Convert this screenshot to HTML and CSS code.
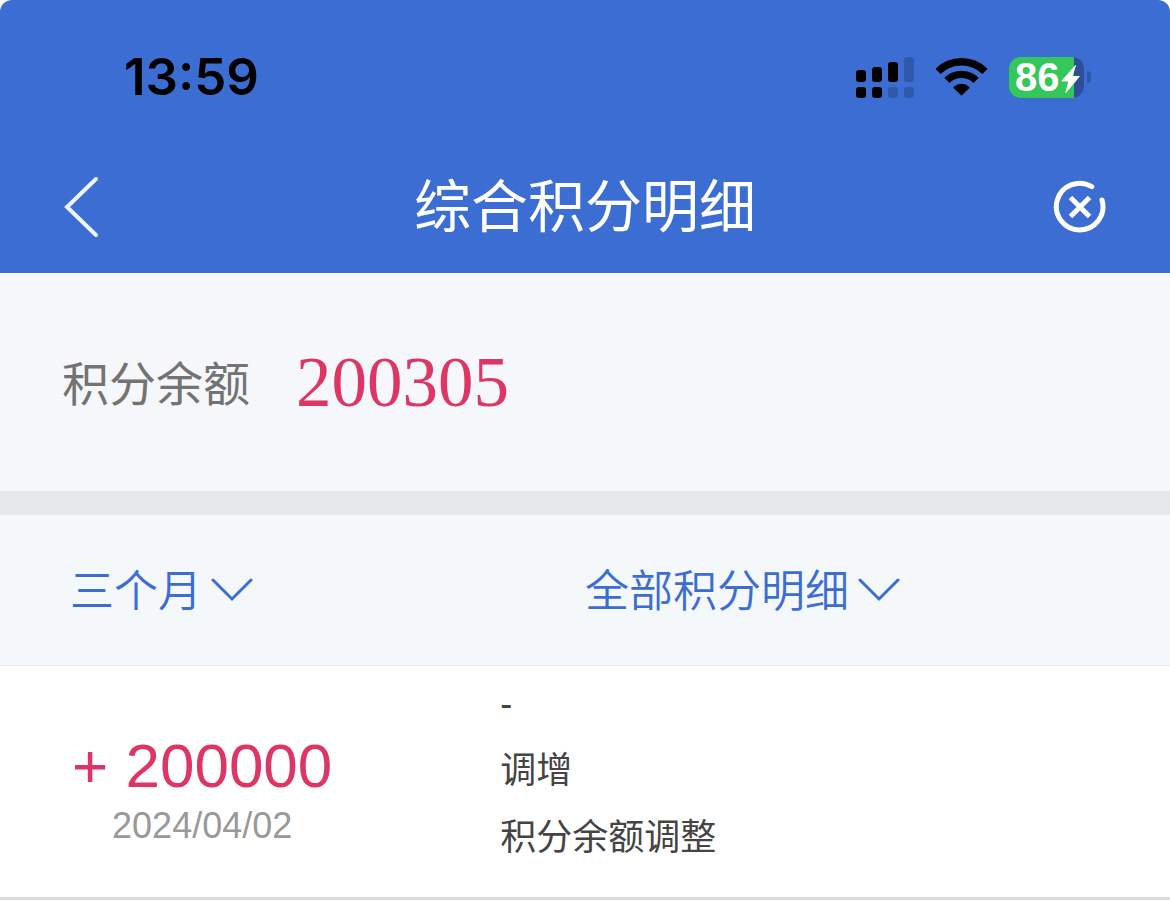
FILE: index.html
```html
<!DOCTYPE html>
<html lang="zh-CN">

<head>
  <meta charset="UTF-8">
  <meta name="viewport" content="width=device-width, initial-scale=1.0">
  <title>综合积分明细</title>
  <link rel="stylesheet" href="styles.css">
</head>

<body>
  <header class="header">
    <div class="status-bar">
      <time class="clock">13:59</time>
      <div class="status-icons">
        <svg class="signal" width="58" height="41" viewBox="0 0 58 41" aria-hidden="true">
          <rect x="0" y="13" width="10" height="12" rx="3" />
          <rect x="16" y="10" width="10" height="15" rx="3" />
          <rect x="32" y="5" width="10" height="20" rx="3" />
          <rect class="dim" x="48" y="0" width="10" height="25" rx="3" />
          <rect x="0" y="30" width="10" height="11" rx="3" />
          <rect x="16" y="30" width="10" height="11" rx="3" />
          <rect class="dim" x="32" y="30" width="10" height="11" rx="3" />
          <rect class="dim" x="48" y="30" width="10" height="11" rx="3" />
        </svg>
        <svg class="wifi" width="51" height="38" viewBox="0 0 51 38" aria-hidden="true">
          <path class="arc" d="M2 13.5A33.3 33.3 0 0 1 49 13.5" />
          <path class="arc" d="M10.9 22.4A20.6 20.6 0 0 1 40.1 22.4" />
          <path class="wedge" d="M18.5 29.5A10.2 10.2 0 0 1 32.5 29.5L25.5 36.3Z" />
        </svg>
        <div class="battery">
          <div class="battery-body">
            <span class="battery-level">86</span>
            <svg class="bolt" width="19" height="28" viewBox="0 0 19 28" aria-hidden="true">
              <path d="M14.5 0.5L0.8 16H8L4.8 27.5L18.3 11.5H11Z" />
            </svg>
          </div>
          <span class="battery-cap"></span>
        </div>
      </div>
    </div>
    <nav class="nav-bar">
      <button class="nav-button" type="button" aria-label="返回">
        <svg width="36" height="62" viewBox="0 0 36 62" aria-hidden="true">
          <path class="back-line" d="M33 3L4 31L33 59" />
        </svg>
      </button>
      <h1 class="title">综合积分明细</h1>
      <button class="nav-button" type="button" aria-label="关闭">
        <svg width="54" height="54" viewBox="0 0 54 54" aria-hidden="true">
          <path class="close-ring" d="M38.8 6.7A23.3 23.3 0 1 0 49 20" />
          <path class="close-cross" d="M17.5 17.5L36.5 36.5M36.5 17.5L17.5 36.5" />
        </svg>
      </button>
    </nav>
  </header>

  <main>
    <section class="balance">
      <span class="balance-label">积分余额</span>
      <span class="balance-value">200305</span>
    </section>

    <form class="filters">
      <div class="filter">
        <select class="filter-select" aria-label="时间">
          <option>三个月</option>
        </select>
        <svg class="chevron" width="42" height="24" viewBox="0 0 42 24" aria-hidden="true">
          <path d="M2 2L21 21L40 2" />
        </svg>
      </div>
      <div class="filter">
        <select class="filter-select" aria-label="明细类型">
          <option>全部积分明细</option>
        </select>
        <svg class="chevron" width="42" height="24" viewBox="0 0 42 24" aria-hidden="true">
          <path d="M2 2L21 21L40 2" />
        </svg>
      </div>
    </form>

    <ul class="records">
      <li class="record">
        <div class="record-main">
          <div class="amount">+ 200000</div>
          <time class="date" datetime="2024-04-02">2024/04/02</time>
        </div>
        <div class="record-info">
          <p>-</p>
          <p>调增</p>
          <p>积分余额调整</p>
        </div>
      </li>
    </ul>
  </main>
</body>

</html>
```
FILE: styles.css
```css
* {
  box-sizing: border-box;
}

body {
  margin: 0;
  background: #fff;
  font-family: "Liberation Sans", "Noto Sans CJK SC", sans-serif;
}

svg {
  display: block;
  flex: none;
}

.header {
  background: #3c6dd3;
  border-radius: 12px 12px 0 0;
  color: #fff;
}

/* status bar */
.status-bar {
  display: flex;
  justify-content: space-between;
  align-items: center;
  padding: 47px 79px 34px 124px;
}

.clock {
  color: #000;
  font: 600 51px/60px Inter, sans-serif;
}

.status-icons {
  display: flex;
  align-items: center;
  gap: 22px;
}

.dim {
  fill: #3059ab;
}

.arc {
  fill: none;
  stroke: #000;
  stroke-width: 7.4;
}

.wedge {
  stroke: #000;
  stroke-width: 2;
  stroke-linejoin: round;
}

.battery {
  display: flex;
  align-items: center;
  gap: 3px;
}

.battery-body {
  position: relative;
  width: 75px;
  padding-left: 6px;
  border-radius: 12px;
  background: linear-gradient(to right, #34c759 65px, #2c4f98 65px);
}

.battery-level {
  display: block;
  font: 700 40px/41px "Liberation Sans", sans-serif;
}

.bolt {
  position: absolute;
  top: 8px;
  right: 4px;
  fill: #fff;
  stroke: #fff;
}

.battery-cap {
  width: 4px;
  height: 12px;
  border-radius: 0 4px 4px 0;
  background: #2f57a8;
}

/* title row */
.nav-bar {
  display: flex;
  justify-content: space-between;
  align-items: center;
  padding: 24px 63px;
}

.nav-button {
  display: flex;
  width: 54px;
  padding: 0;
  border: 0;
  background: none;
  cursor: pointer;
}

.title {
  margin: 0;
  font-size: 57px;
  font-weight: 400;
  line-height: 84px;
}

.back-line {
  fill: none;
  stroke: #f0f4fc;
  stroke-width: 4;
  stroke-linecap: round;
}

.close-ring,
.close-cross {
  fill: none;
  stroke: #fff;
  stroke-width: 5;
}

.close-ring {
  stroke-linecap: round;
}

/* balance */
.balance {
  display: flex;
  align-items: center;
  gap: 46px;
  padding: 65px 62px;
  border-bottom: 24px solid #e6e8ea;
  background: #f5f7fb;
}

.balance-label {
  padding-bottom: 4px;
  color: #737373;
  font-size: 47px;
}

.balance-value {
  color: #dd3564;
  font: 400 71px/88px "Liberation Serif", serif;
}

/* filters */
.filters {
  display: grid;
  grid-template-columns: 1fr 1fr;
  padding: 43px 0;
  border-bottom: 1px solid #e8eaec;
  background: #f4f8fb;
}

.filter {
  display: flex;
  align-items: center;
  gap: 9px;
}

.filter:first-child {
  padding-left: 70px;
}

.filter-select {
  appearance: none;
  padding: 5px 0 1px;
  border: 0;
  background: none;
  color: #3c6dd3;
  font: inherit;
  font-size: 44px;
  font-weight: 350;
  line-height: 58px;
}

.chevron {
  fill: none;
  stroke: #3c6dd3;
  stroke-width: 3;
  stroke-linecap: round;
}

/* records */
.records {
  margin: 0;
  padding: 0;
  list-style: none;
}

.record {
  display: grid;
  grid-template-columns: 39% 1fr;
  justify-items: start;
  align-items: center;
  padding: 4px 0 26px 72px;
  border-bottom: 3px solid #dcdcdc;
}

.record-main {
  padding-top: 39px;
  text-align: center;
}

.amount {
  color: #dd3564;
  font-size: 62px;
  line-height: 72px;
}

.date {
  display: block;
  color: #999;
  font-size: 36px;
  line-height: 48px;
}

.record-info {
  color: #444;
  font-size: 36px;
  line-height: 67px;
}

.record-info p {
  margin: 0;
}
```
